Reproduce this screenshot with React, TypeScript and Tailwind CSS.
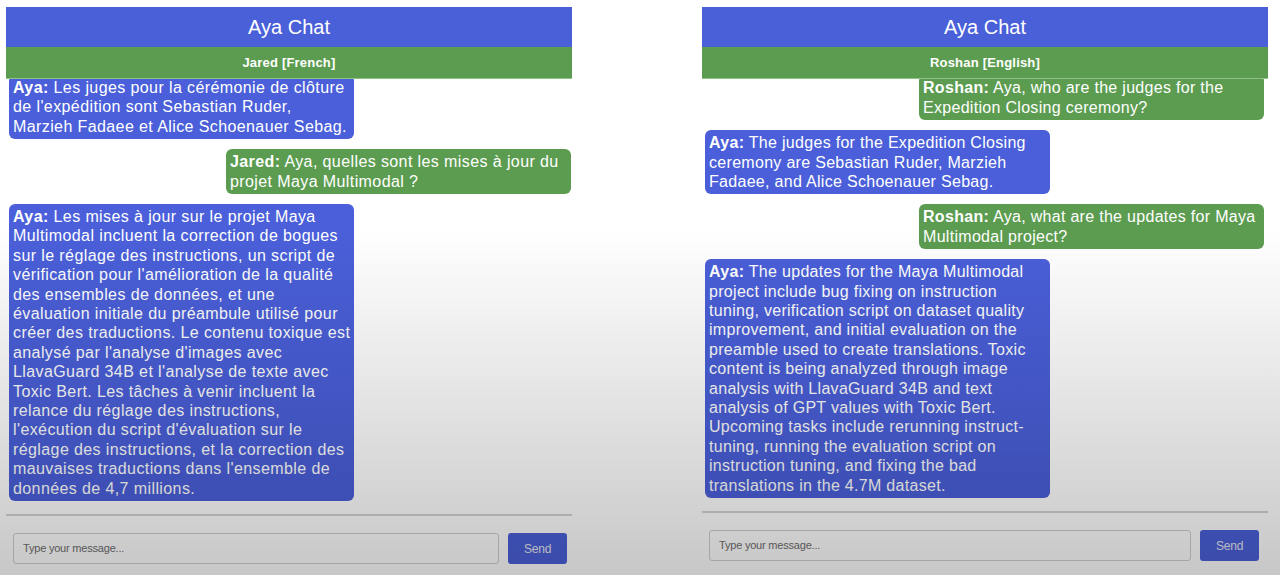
import React from "react";

type Msg = { who: string; me: boolean; lines: string[] };

const left: Msg[] = [
  {
    who: "Aya",
    me: false,
    lines: [
      " Les juges pour la cérémonie de clôture",
      "de l'expédition sont Sebastian Ruder,",
      "Marzieh Fadaee et Alice Schoenauer Sebag.",
    ],
  },
  {
    who: "Jared",
    me: true,
    lines: [" Aya, quelles sont les mises à jour du", "projet Maya Multimodal ?"],
  },
  {
    who: "Aya",
    me: false,
    lines: [
      " Les mises à jour sur le projet Maya",
      "Multimodal incluent la correction de bogues",
      "sur le réglage des instructions, un script de",
      "vérification pour l'amélioration de la qualité",
      "des ensembles de données, et une",
      "évaluation initiale du préambule utilisé pour",
      "créer des traductions. Le contenu toxique est",
      "analysé par l'analyse d'images avec",
      "LlavaGuard 34B et l'analyse de texte avec",
      "Toxic Bert. Les tâches à venir incluent la",
      "relance du réglage des instructions,",
      "l'exécution du script d'évaluation sur le",
      "réglage des instructions, et la correction des",
      "mauvaises traductions dans l'ensemble de",
      "données de 4,7 millions.",
    ],
  },
];

const right: Msg[] = [
  {
    who: "Roshan",
    me: true,
    lines: [" Aya, who are the judges for the", "Expedition Closing ceremony?"],
  },
  {
    who: "Aya",
    me: false,
    lines: [
      " The judges for the Expedition Closing",
      "ceremony are Sebastian Ruder, Marzieh",
      "Fadaee, and Alice Schoenauer Sebag.",
    ],
  },
  {
    who: "Roshan",
    me: true,
    lines: [" Aya, what are the updates for Maya", "Multimodal project?"],
  },
  {
    who: "Aya",
    me: false,
    lines: [
      " The updates for the Maya Multimodal",
      "project include bug fixing on instruction",
      "tuning, verification script on dataset quality",
      "improvement, and initial evaluation on the",
      "preamble used to create translations. Toxic",
      "content is being analyzed through image",
      "analysis with LlavaGuard 34B and text",
      "analysis of GPT values with Toxic Bert.",
      "Upcoming tasks include rerunning instruct-",
      "tuning, running the evaluation script on",
      "instruction tuning, and fixing the bad",
      "translations in the 4.7M dataset.",
    ],
  },
];

function Bubble({ m, side }: { m: Msg; side: "l" | "r" }) {
  return (
    <div
      className={
        (m.me
          ? side === "l"
            ? "self-end mr-[1px] bg-[#5c9c50] "
            : "self-end mr-[4px] bg-[#5c9c50] "
          : "self-start ml-[3px] bg-[#4a5fd9] ") +
        "w-[345px] shrink-0 rounded-[6px] px-[4px] py-[3px] text-white text-[16px] leading-[19.4px] whitespace-nowrap overflow-hidden " +
        (side === "l" ? "tracking-[0.4px]" : "tracking-[0.3px]")
      }
    >
      {m.lines.map((l, i) => (
        <div key={i}>
          {i === 0 && <span className="font-bold">{m.who}:</span>}
          {l}
        </div>
      ))}
    </div>
  );
}

function Panel({
  user,
  msgs,
  side,
}: {
  user: string;
  msgs: Msg[];
  side: "l" | "r";
}) {
  return (
    <div className="w-[566px] h-full flex flex-col">
      <div className="h-[40px] shrink-0 bg-[#4a60d9] text-white text-[20px] flex items-center justify-center">
        Aya Chat
      </div>
      <div className="h-[32px] shrink-0 bg-[#5c9c50] border-b border-[#8fc287] text-white text-[13px] tracking-[0.2px] font-bold flex items-center justify-center">
        {user}
      </div>
      <div
        className={
          "shrink-0 overflow-hidden flex flex-col justify-end gap-[10px] pb-[13px] " +
          (side === "l" ? "h-[435px]" : "h-[432px]")
        }
      >
        {msgs.map((m, i) => (
          <Bubble key={i} m={m} side={side} />
        ))}
      </div>
      <div className="h-[2px] shrink-0 bg-[#d4d4d4]" />
      <div
        className={
          "flex items-center gap-[9px] pl-[7px] pt-[17px] " +
          (side === "l" ? "pr-[5px]" : "pr-[9px]")
        }
      >
        <div className="flex-1 h-[31px] border border-[#cfcfcf] rounded-[3px] flex items-center pl-[9px] text-[11px] tracking-[-0.2px] text-[#6e6e6e]">
          Type your message...
        </div>
        <div className="w-[59px] h-[31px] rounded-[3px] bg-[#4a60d9] text-[#e6e8f4] text-[12px] tracking-[-0.2px] flex items-center justify-center">
          Send
        </div>
      </div>
    </div>
  );
}

export default function App() {
  return (
    <div
      className="relative w-[1280px] h-[575px] overflow-hidden bg-white"
      style={{ fontFamily: '"Liberation Sans", Arial, sans-serif' }}
    >
      <div className="flex h-full pt-[7px] pl-[6px] gap-[130px]">
        <Panel user="Jared [French]" msgs={left} side="l" />
        <Panel user="Roshan [English]" msgs={right} side="r" />
      </div>
      <div className="pointer-events-none absolute inset-0 bg-[linear-gradient(to_bottom,rgba(0,0,0,0)_0%,rgba(0,0,0,0)_40%,rgba(0,0,0,0.22)_100%)]" />
    </div>
  );
}
